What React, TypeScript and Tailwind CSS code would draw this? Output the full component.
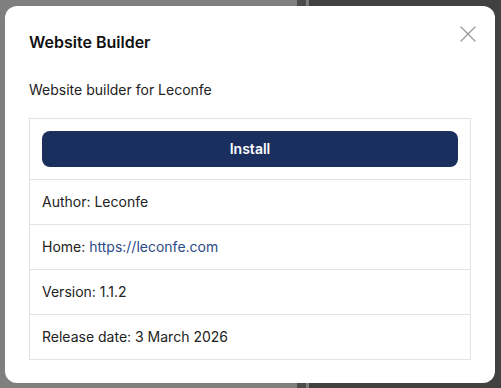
import { X } from "lucide-react";

const rows = [
  { label: "Author", value: "Leconfe" },
  { label: "Home", value: "https://leconfe.com", link: true },
  { label: "Version", value: "1.1.2" },
  { label: "Release date", value: "3 March 2026" },
];

export default function App() {
  return (
    <div
      className="relative w-[501px] h-[388px] overflow-hidden"
      style={{ fontFamily: "Inter, 'Noto Sans', sans-serif" }}
    >
      {/* dimmed page behind the dialog */}
      <div className="flex h-full">
        <div className="w-[297px] bg-[#7f7f7f]" />
        <div className="w-[9px] bg-[#4c4c4c]" />
        <div className="w-[3px] bg-[#7c7c7c]" />
        <div className="flex-1 bg-[#414141]" />
      </div>

      {/* dialog */}
      <div className="absolute left-[5px] top-[6px] w-[490px] h-[377px] rounded-xl bg-white p-6">
        <button className="absolute right-[13px] top-[14px] text-[#9a9a9a]">
          <X className="w-7 h-7" strokeWidth={1.1} />
        </button>

        <h2 className="text-base leading-6 font-semibold text-[#111]">Website Builder</h2>
        <p className="mt-6 text-sm leading-6 text-[#222]">Website builder for Leconfe</p>

        <div className="mt-4 border border-[#e3e3e3] text-sm leading-5 text-[#222]">
          <div className="p-3">
            <button className="w-full h-9 rounded-lg bg-[#1b2f5f] text-white font-semibold text-sm">
              Install
            </button>
          </div>
          {rows.map((r) => (
            <div key={r.label} className="border-t border-[#e3e3e3] px-3 py-3">
              {r.label}:{" "}
              {r.link ? (
                <a href={r.value} className="text-[#2b4a86]">
                  {r.value}
                </a>
              ) : (
                r.value
              )}
            </div>
          ))}
        </div>
      </div>
    </div>
  );
}
